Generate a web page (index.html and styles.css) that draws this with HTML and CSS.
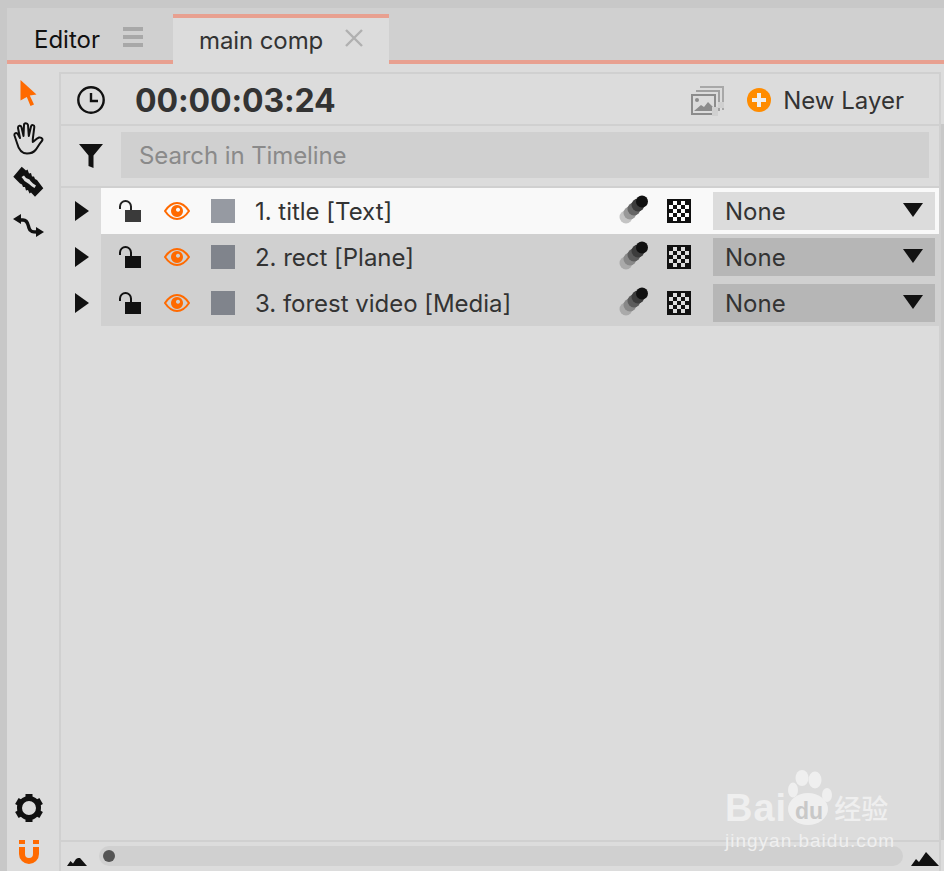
FILE: index.html
```html
<!DOCTYPE html>
<html lang="en">
<head>
<meta charset="utf-8">
<title>Timeline</title>
<link rel="stylesheet" href="styles.css">
</head>
<body>
<div class="app">
  <div class="tabs">
    <div class="tab tab-editor"><span>Editor</span>
      <svg class="menu" width="20" height="20" viewBox="0 0 20 20"><path d="M0 0h20v4H0zM0 8h20v4H0zM0 16h20v4H0z" fill="#a8a8a8"/></svg>
    </div>
    <div class="tab tab-active"><span>main comp</span>
      <svg class="close" width="18" height="18" viewBox="0 0 18 18"><path d="M1 1l16 16M17 1L1 17" stroke="#b0b0b0" stroke-width="2.400" fill="none"/></svg>
    </div>
  </div>
  <div class="main">
    <div class="tools">
      <div class="tools-top">
        <svg width="20" height="28" viewBox="0 0 20 28"><path d="M1.500 1L17.500 15.500L10.800 16.500L15 25.500L11.500 27L7.800 18L1.500 21.500Z" fill="#ff6a00"/></svg>
        <svg width="32" height="33" viewBox="0 0 32 33"><path d="M14 31.500C8 31.500 5.500 27 4 21L1.500 13.500C1 11 3.500 10 4.800 12L7 16L5 6C4.800 3.500 7.800 3 8.500 5.200L10.500 14L11 3C11 .5 14.500 .5 15 3L15.800 14L18 4.500C18.600 2.300 21.600 2.800 21.300 5.200L19.800 17V20C21.500 19 23 16.500 26 15.500C29 15 30.500 17.500 28.500 19.500C26 22 25 25 22.500 28C20.500 30.500 17.500 31.500 14 31.500Z" fill="none" stroke="#111" stroke-width="2" stroke-linejoin="round"/></svg>
        <svg class="razor" width="32" height="32" viewBox="0 0 32 32"><path d="M8.700.7L13 4.500 14.500 3.500 16 7.500 18 7 19 10.500 21 10.500 22 13 24 14 30.300 22.300 22 30.700 18 26.500 16.500 27.500 15 24 13 24.500 12 21 10 21 9 18.500 7 17.500 .3 10.700Z" fill="#111"/><path d="M8.500 11L11 9.500 13 12 16.500 13.500 17.500 15 20 17.500 23 19.500 21.500 22 19 20.500 16 18 14.500 17 11.500 15 10.500 13.500Z" fill="#ddd"/></svg>
        <svg width="32" height="26" viewBox="0 0 32 26"><path d="M7 7h3c5 0 5 5 6 8 1 4 4 4 8 4" fill="none" stroke="#111" stroke-width="3.400"/><path d="M0 6L8 1V11ZM31 19L23 14V24Z" fill="#111"/></svg>
      </div>
      <div class="tools-bottom">
        <svg width="30" height="30" viewBox="0 0 30 30"><circle cx="15" cy="15" r="9.500" fill="none" stroke="#111" stroke-width="5"/><g fill="#111"><rect x="11.500" y="1" width="7" height="5"/><rect x="11.500" y="1" width="7" height="5" transform="rotate(60 15 15)"/><rect x="11.500" y="1" width="7" height="5" transform="rotate(120 15 15)"/><rect x="11.500" y="1" width="7" height="5" transform="rotate(180 15 15)"/><rect x="11.500" y="1" width="7" height="5" transform="rotate(240 15 15)"/><rect x="11.500" y="1" width="7" height="5" transform="rotate(300 15 15)"/></g></svg>
        <svg width="20" height="24" viewBox="0 0 20 24"><path d="M0 0h6v4H0zM14 0h6v4h-6z" fill="#ff6a00"/><path d="M3 7v7a7 7 0 0 0 14 0V7" fill="none" stroke="#ff6a00" stroke-width="6"/></svg>
      </div>
    </div>
    <div class="panel">
      <div class="head">
        <svg class="clock" width="28" height="28" viewBox="0 0 28 28"><circle cx="14" cy="14" r="12.700" fill="none" stroke="#111" stroke-width="2.400"/><path d="M14 7v8h7" fill="none" stroke="#111" stroke-width="2.400"/></svg>
        <div class="time">00:00:03:24</div>
        <svg class="images" width="33" height="31" viewBox="0 0 33 31"><path d="M9 1h23v23" fill="none" stroke="#a8a8a8" stroke-width="2"/><path d="M5 5h23v20" fill="none" stroke="#a0a0a0" stroke-width="2"/><rect x="1" y="9" width="23" height="19" fill="#dcdcdc" stroke="#8c8c8c" stroke-width="2"/><circle cx="6" cy="14" r="2" fill="#8c8c8c"/><path d="M3 25l7-6 3 2 4-5 6 6v3H3z" fill="#8c8c8c"/><path d="M21 21h6v-5h6v6h-6v8h-6z" fill="#d0d0d0"/></svg>
        <svg class="plus" width="24" height="24" viewBox="0 0 24 24"><circle cx="12" cy="12" r="12" fill="#ff8c00"/><path d="M10 5h4v5h5v4h-5v5h-4v-5H5v-4h5z" fill="#eee"/></svg>
        <div class="new">New Layer</div>
      </div>
      <div class="search-row">
        <svg class="filter" width="24" height="24" viewBox="0 0 24 24"><path d="M0 0h24L14.500 11.500V24l-5-2V11.500z" fill="#111"/></svg>
        <div class="search">Search in Timeline</div>
      </div>
      <div class="rows">
        <div class="row-wrap">
          <svg class="arrow" width="14" height="20" viewBox="0 0 14 20"><path d="M0 0l14 10L0 20z" fill="#111"/></svg>
          <div class="row row-sel">
            <svg class="lock" width="24" height="24" viewBox="0 0 24 24"><path d="M2 10V7.500a5.500 5.500 0 0 1 11 0V11" fill="none" stroke="#222" stroke-width="2"/><rect x="7" y="11" width="16" height="12" fill="#3a3a3a"/></svg>
            <svg class="eye" width="26" height="18" viewBox="0 0 26 18"><path d="M1 9C5 3 9 1 13 1s8 2 12 8c-4 6-8 8-12 8S5 15 1 9z" fill="none" stroke="#ff6a00" stroke-width="2"/><path d="M13 3a6 6 0 1 0 .01 0zM14 5.800a2 2 0 1 0 .01 0z" fill="#ff6a00" fill-rule="evenodd"/></svg>
            <div class="swatch swatch-sel"></div>
            <div class="name">1. title [Text]</div>
            <svg class="blur" width="30" height="29" viewBox="0 0 30 29"><circle cx="7" cy="22" r="6.500" fill="#c4c4c4"/><circle cx="11" cy="18" r="6.500" fill="#999"/><circle cx="15" cy="14" r="6.500" fill="#666"/><circle cx="19" cy="10" r="6.500" fill="#3c3c3c"/><circle cx="23" cy="6.500" r="6" fill="#111"/></svg>
            <svg class="check" width="24" height="24" viewBox="0 0 24 24"><rect width="24" height="24" fill="#111"/><rect x="2" y="2" width="20" height="20" fill="#fff"/><path d="M2 2h4v4H2zM10 2h4v4h-4zM18 2h4v4h-4zM6 6h4v4H6zM14 6h4v4h-4zM2 10h4v4H2zM10 10h4v4h-4zM18 10h4v4h-4zM6 14h4v4H6zM14 14h4v4h-4zM2 18h4v4H2zM10 18h4v4h-4zM18 18h4v4h-4z" fill="#111"/></svg>
            <div class="select select-sel"><span>None</span><svg width="20" height="14" viewBox="0 0 20 14"><path d="M0 0h20L10 14z" fill="#111"/></svg></div>
          </div>
        </div>
        <div class="row-wrap">
          <svg class="arrow" width="14" height="20" viewBox="0 0 14 20"><path d="M0 0l14 10L0 20z" fill="#111"/></svg>
          <div class="row">
            <svg class="lock" width="24" height="24" viewBox="0 0 24 24"><path d="M2 10V7.500a5.500 5.500 0 0 1 11 0V11" fill="none" stroke="#111" stroke-width="2"/><rect x="7" y="11" width="16" height="12" fill="#111"/></svg>
            <svg class="eye" width="26" height="18" viewBox="0 0 26 18"><path d="M1 9C5 3 9 1 13 1s8 2 12 8c-4 6-8 8-12 8S5 15 1 9z" fill="none" stroke="#ff6a00" stroke-width="2"/><path d="M13 3a6 6 0 1 0 .01 0zM14 5.800a2 2 0 1 0 .01 0z" fill="#ff6a00" fill-rule="evenodd"/></svg>
            <div class="swatch"></div>
            <div class="name">2. rect [Plane]</div>
            <svg class="blur" width="30" height="29" viewBox="0 0 30 29"><circle cx="7" cy="22" r="6.500" fill="#aaa"/><circle cx="11" cy="18" r="6.500" fill="#888"/><circle cx="15" cy="14" r="6.500" fill="#5c5c5c"/><circle cx="19" cy="10" r="6.500" fill="#3c3c3c"/><circle cx="23" cy="6.500" r="6" fill="#111"/></svg>
            <svg class="check" width="24" height="24" viewBox="0 0 24 24"><rect width="24" height="24" fill="#111"/><rect x="2" y="2" width="20" height="20" fill="#ddd"/><path d="M2 2h4v4H2zM10 2h4v4h-4zM18 2h4v4h-4zM6 6h4v4H6zM14 6h4v4h-4zM2 10h4v4H2zM10 10h4v4h-4zM18 10h4v4h-4zM6 14h4v4H6zM14 14h4v4h-4zM2 18h4v4H2zM10 18h4v4h-4zM18 18h4v4h-4z" fill="#111"/></svg>
            <div class="select"><span>None</span><svg width="20" height="14" viewBox="0 0 20 14"><path d="M0 0h20L10 14z" fill="#111"/></svg></div>
          </div>
        </div>
        <div class="row-wrap">
          <svg class="arrow" width="14" height="20" viewBox="0 0 14 20"><path d="M0 0l14 10L0 20z" fill="#111"/></svg>
          <div class="row">
            <svg class="lock" width="24" height="24" viewBox="0 0 24 24"><path d="M2 10V7.500a5.500 5.500 0 0 1 11 0V11" fill="none" stroke="#111" stroke-width="2"/><rect x="7" y="11" width="16" height="12" fill="#111"/></svg>
            <svg class="eye" width="26" height="18" viewBox="0 0 26 18"><path d="M1 9C5 3 9 1 13 1s8 2 12 8c-4 6-8 8-12 8S5 15 1 9z" fill="none" stroke="#ff6a00" stroke-width="2"/><path d="M13 3a6 6 0 1 0 .01 0zM14 5.800a2 2 0 1 0 .01 0z" fill="#ff6a00" fill-rule="evenodd"/></svg>
            <div class="swatch"></div>
            <div class="name">3. forest video [Media]</div>
            <svg class="blur" width="30" height="29" viewBox="0 0 30 29"><circle cx="7" cy="22" r="6.500" fill="#aaa"/><circle cx="11" cy="18" r="6.500" fill="#888"/><circle cx="15" cy="14" r="6.500" fill="#5c5c5c"/><circle cx="19" cy="10" r="6.500" fill="#3c3c3c"/><circle cx="23" cy="6.500" r="6" fill="#111"/></svg>
            <svg class="check" width="24" height="24" viewBox="0 0 24 24"><rect width="24" height="24" fill="#111"/><rect x="2" y="2" width="20" height="20" fill="#ddd"/><path d="M2 2h4v4H2zM10 2h4v4h-4zM18 2h4v4h-4zM6 6h4v4H6zM14 6h4v4h-4zM2 10h4v4H2zM10 10h4v4h-4zM18 10h4v4h-4z" fill="#111"/><path d="M6 14h4v4H6zM14 14h4v4h-4zM2 18h4v4H2zM10 18h4v4h-4zM18 18h4v4h-4z" fill="#111"/></svg>
            <div class="select"><span>None</span><svg width="20" height="14" viewBox="0 0 20 14"><path d="M0 0h20L10 14z" fill="#111"/></svg></div>
          </div>
        </div>
      </div>
      <div class="spacer"></div>
      <div class="foot">
        <svg width="20" height="8" viewBox="0 0 20 8"><path d="M0 8L3.500 3 6 5.500 9 1 11 0h2l7 8z" fill="#111"/></svg>
        <div class="scroll"><div class="thumb"></div></div>
        <svg width="28" height="14" viewBox="0 0 28 14"><path d="M0 14L5 7l3 3 7-10 13 14z" fill="#111"/></svg>
      </div>
    </div>
    <div class="vtrack"><div class="vtrack-bar"></div></div>
  </div>
</div>
<div class="mark">
  <svg class="paw" width="46" height="60" viewBox="0 0 46 60"><ellipse cx="15" cy="10" rx="6.500" ry="8" fill="#efefef"/><ellipse cx="28" cy="12" rx="6.500" ry="8.500" fill="#efefef"/><ellipse cx="6" cy="22" rx="5" ry="7.500" fill="#efefef"/><ellipse cx="40" cy="27" rx="5" ry="7" fill="#efefef"/><ellipse cx="21" cy="41" rx="20" ry="16" fill="#efefef"/></svg>
  <div class="mark-top">
    <span class="mark-bai">Bai</span>
    <span class="mark-cn">经验</span>
  </div>
  <span class="mark-du">du</span>
  <div class="mark-url">jingyan.baidu.com</div>
</div>
</body>
</html>
```

FILE: styles.css
```css
* { box-sizing: border-box; }
html, body { margin: 0; height: 100%; overflow: hidden; }
body {
  background: #c8c8c8;
  font-family: Inter, "Noto Sans CJK SC", sans-serif;
  color: #333;
}
.app {
  margin: 8px 0 0 7px;
  height: 863px;
  display: flex;
  flex-direction: column;
  background: #dcdcdc;
}
.tabs {
  height: 56px;
  background: #d0d0d0;
  display: flex;
  align-items: flex-end;
  border-bottom: 4px solid #e8a090;
  flex: none;
}
.tab { display: flex; align-items: center; font-size: 24px; }
.tab-editor {
  width: 166px;
  height: 52px;
  padding: 10px 0 0 27px;
  color: #111;
  gap: 23px;
}
.tab-active {
  width: 216px;
  height: 50px;
  margin-bottom: -4px;
  padding: 0 0 2px 26px;
  background: #dcdcdc;
  border-top: 4px solid #e8a090;
  color: #333;
  gap: 22px;
  letter-spacing: -.1px;
}
.menu { margin-top: -4px; }
.close { margin-top: -4px; }
.main { flex: 1; display: flex; min-height: 0; }
.tools {
  width: 52px;
  flex: none;
  display: flex;
  flex-direction: column;
  justify-content: space-between;
  align-items: center;
  padding: 15px 8px 7px 0;
}
.tools-top { display: flex; flex-direction: column; align-items: center; gap: 15px; }
.razor { margin-top: -4px; }
.tools-bottom { display: flex; flex-direction: column; align-items: center; gap: 17px; }
.panel {
  flex: 1;
  margin-top: 8px;
  border-left: 2px solid #d0d0d0;
  border-top: 2px solid #d0d0d0;
  border-right: 2px solid #d0d0d0;
  display: flex;
  flex-direction: column;
  min-width: 0;
}
.vtrack { width: 3px; flex: none; padding: 60px 0 31px; }
.vtrack-bar { height: 100%; background: #c8c8c8; }
.head {
  height: 52px;
  flex: none;
  display: flex;
  align-items: center;
  border-bottom: 2px solid #d0d0d0;
  padding-top: 2px;
}
.clock { margin-left: 16px; flex: none; }
.time { font-size: 32px; font-weight: 700; margin-left: 30px; flex: 1; letter-spacing: -.12px; }
.images { margin-right: 23px; margin-top: 2px; flex: none; }
.plus { flex: none; margin-right: 12px; }
.new { font-size: 24px; margin-right: 35px; }
.search-row {
  height: 62px;
  flex: none;
  display: flex;
  align-items: center;
  border-bottom: 2px solid #d0d0d0;
  padding: 0 10px 2px 0;
}
.filter { margin: 2px 18px 0; flex: none; }
.search {
  flex: 1;
  height: 46px;
  background: #d0d0d0;
  color: #8a8a8a;
  font-size: 24px;
  letter-spacing: -.1px;
  display: flex;
  align-items: center;
  padding-left: 18px;
}
.row-wrap { height: 46px; display: flex; align-items: center; }
.arrow { margin-left: 14px; margin-right: 12px; flex: none; }
.row {
  flex: 1;
  height: 46px;
  display: flex;
  align-items: center;
  background: #d0d0d0;
  padding: 0 4px 0 17px;
  color: #333;
}
.row-sel { background: #f9f9f9; }
.lock { flex: none; }
.eye { flex: none; margin-left: 22px; }
.swatch { width: 24px; height: 24px; background: #80848c; margin-left: 21px; flex: none; }
.swatch-sel { background: #969aa2; }
.name { font-size: 24px; margin-left: 20px; flex: 1; white-space: nowrap; letter-spacing: -.02px; }
.blur { flex: none; margin-right: 18px; margin-top: -4px; }
.check { flex: none; margin-right: 22px; }
.select {
  width: 222px;
  height: 38px;
  flex: none;
  background: #b6b6b6;
  display: flex;
  align-items: center;
  justify-content: space-between;
  padding: 0 12px;
  font-size: 24px;
}
.select svg { margin-top: -2px; }
.select-sel { background: #dcdcdc; }
.spacer { flex: 1; }
.foot {
  height: 31px;
  flex: none;
  display: flex;
  align-items: flex-end;
  border-top: 2px solid #d0d0d0;
  padding: 0 0 5px 6px;
}
.foot svg { flex: none; }
.scroll {
  flex: 1;
  height: 20px;
  margin: 0 8px 0 12px;
  border-radius: 10px;
  background: #d0d0d0;
  display: flex;
  align-items: center;
  padding-left: 4px;
}
.thumb { width: 12px; height: 12px; border-radius: 50%; background: #555; }
.mark {
  position: absolute;
  left: 725px;
  top: 768px;
  width: 172px;
  color: #efefef;
}
.paw { position: absolute; left: 62px; top: 0; }
.mark-top { display: flex; align-items: flex-end; height: 62px; position: relative; }
.mark-bai { font-family: "Liberation Sans", sans-serif; font-size: 38px; font-weight: 700; line-height: 44px; letter-spacing: 1px; }
.mark-du { position: absolute; left: 70px; top: 31px; font-family: "Liberation Sans", sans-serif; font-size: 23px; font-weight: 700; color: #c8c8c8; line-height: 24px; }
.mark-cn { font-size: 27px; line-height: 40px; margin-left: 47px; font-weight: 500; }
.mark-url { font-family: "Liberation Sans", sans-serif; font-size: 19px; letter-spacing: 1px; margin-top: 0; white-space: nowrap; }
```
